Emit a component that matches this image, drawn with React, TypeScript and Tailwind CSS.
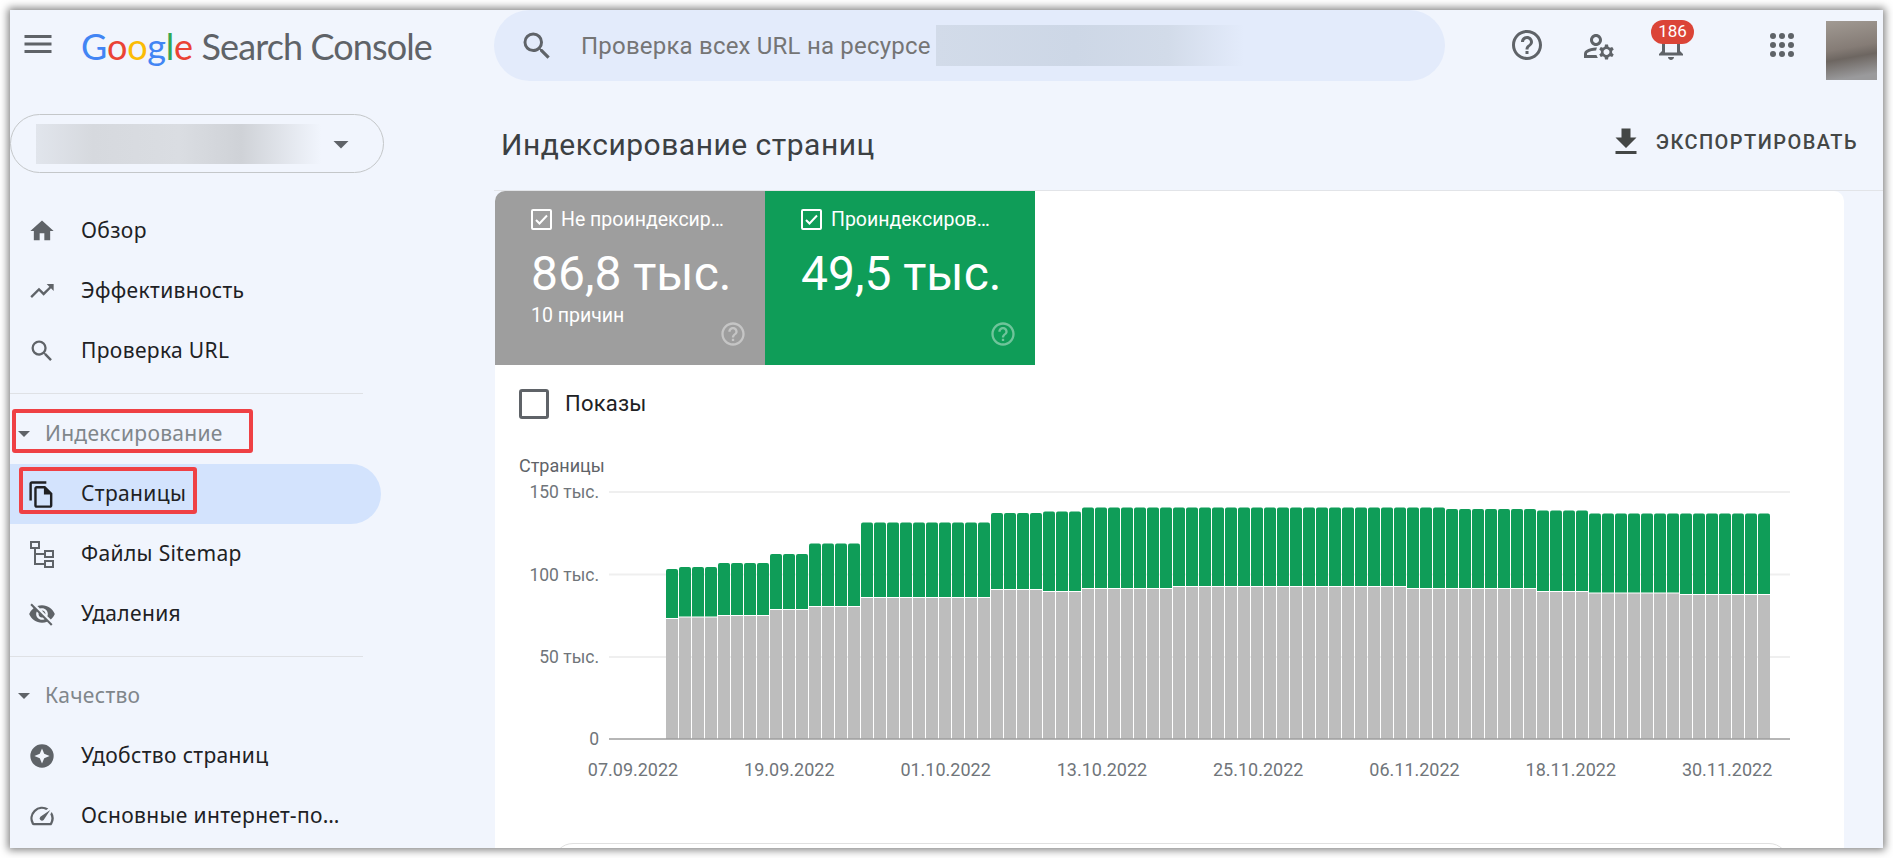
import React from "react";
import {
  MdMenu, MdSearch, MdHelpOutline, MdOutlineManageAccounts, MdOutlineNotifications,
  MdHome, MdTrendingUp, MdOutlineFileCopy, MdVisibilityOff, MdOutlineSpeed, MdFileDownload, MdArrowDropDown,
} from "react-icons/md";

const BASE = 739;
const segments: [number, number, number][] = [
  [1, 569, 619], [3, 567, 617.5], [4, 563, 616], [3, 554, 610], [4, 543.5, 607], [10, 522.5, 598],
  [4, 513, 590], [3, 511.5, 592], [7, 507.5, 589], [18, 507.5, 587], [3, 507.5, 589], [7, 509, 589],
  [4, 510.5, 592], [7, 513.5, 593.5], [7, 513.5, 595],
];
const bars: { g: number; s: number }[] = segments.flatMap(([n, g, s]) => Array.from({ length: n }, () => ({ g, s })));
const dates = ["07.09.2022", "19.09.2022", "01.10.2022", "13.10.2022", "25.10.2022", "06.11.2022", "18.11.2022", "30.11.2022"];
const yTicks: [number, string][] = [[492, "150 тыс."], [574.5, "100 тыс."], [657, "50 тыс."], [739, "0"]];

function SitemapIcon() {
  return (
    <svg width="26" height="28" viewBox="0 0 26 28" fill="none" stroke="#5f6368" strokeWidth="2" className="ml-px">
      <rect x="2" y="2" width="8" height="6" />
      <rect x="16" y="11" width="8" height="6" />
      <rect x="16" y="21" width="8" height="6" />
      <path d="M6 8v16h10M6 14h10" />
    </svg>
  );
}

function SparkIcon() {
  return (
    <svg width="28" height="28" viewBox="0 0 24 24">
      <path fill="#5f6368" fillRule="evenodd" d="M12 2a10 10 0 1 0 0 20 10 10 0 0 0 0-20zm0 3.500 1.900 4.600 4.600 1.900-4.600 1.900-1.900 4.600-1.900-4.600L5.500 12l4.600-1.900z" />
    </svg>
  );
}

function AppsIcon() {
  return (
    <svg width="36" height="36" viewBox="0 0 36 36" fill="#5f6368" className="mt-[17px]">
      {[9, 18, 27].flatMap((y) => [9, 18, 27].map((x) => <circle key={`${x}-${y}`} cx={x} cy={y} r="3" />))}
    </svg>
  );
}

function NavRow({ icon, label, active, children }: { icon: React.ReactNode; label: string; active?: boolean; children?: React.ReactNode }) {
  return (
    <div className={`relative flex h-[60px] w-[371px] items-center rounded-r-[30px] ${active ? "bg-[#d3e3fd]" : ""}`}>
      <span className="flex w-[71px] shrink-0 items-center justify-start pl-[18px]">{icon}</span>
      <span className="font-['Noto_Sans',sans-serif] text-[21px] tracking-[0.35px] text-[#202124]">{label}</span>
      {children}
    </div>
  );
}

function Section({ label, className, children }: { label: string; className: string; children?: React.ReactNode }) {
  return (
    <div className={`relative flex h-[60px] items-center ${className}`}>
      <svg className="ml-[8px] w-[12px]" height="6" viewBox="0 0 12 6"><path d="M0 0h12L6 6z" fill="#5f6368" /></svg>
      <span className="ml-[15px] font-['Noto_Sans',sans-serif] text-[21px] tracking-[0.3px] text-[#80868b]">{label}</span>
      {children}
    </div>
  );
}

function Tile({ color, title, value, sub }: { color: string; title: string; value: string; sub?: string }) {
  return (
    <div className={`relative h-[174px] w-[270px] pl-[36px] pt-[18px] text-white ${color}`}>
      <div className="flex h-[21px] items-center">
        <span className="flex size-[21px] items-center justify-center rounded-[2px] border-2 border-white">
          <svg width="13" height="11" viewBox="0 0 13 11" fill="none" stroke="#fff" strokeWidth="2"><path d="M1 6l3.500 3.500L12 1.500" /></svg>
        </span>
        <span className="ml-[9px] text-[19.5px] leading-[24px]">{title}</span>
      </div>
      <div className="mt-[14px] text-[48px] leading-[60px]">{value}</div>
      {sub && <div className="text-[19.5px] leading-[24px]">{sub}</div>}
      <MdHelpOutline size={28} className="absolute bottom-[17px] right-[18px] text-white/40" />
    </div>
  );
}

export default function App() {
  return (
    <div className="h-[858px] w-[1893px] overflow-hidden bg-white p-[10px] font-['Roboto',sans-serif]">
      <div className="flex h-[838px] w-[1873px] flex-col overflow-hidden bg-[#f1f5fd] shadow-[0_0_8px_2px_rgba(0,0,0,0.5)]">
        <header className="flex h-[71px] shrink-0 items-start">
          <div className="flex w-[484px] shrink-0 items-start">
            <MdMenu size={36} className="ml-[10px] mt-[16px] shrink-0 text-[#5f6368]" />
            <div className="ml-[25px] mt-[14px] flex items-baseline whitespace-nowrap font-['Lato',sans-serif] text-[36px] leading-[44px]">
              <span className="tracking-[-0.3px] text-[#4285f4]">G</span>
              <span className="tracking-[-0.3px] text-[#ea4335]">o</span>
              <span className="tracking-[-0.3px] text-[#fbbc05]">o</span>
              <span className="tracking-[-0.3px] text-[#4285f4]">g</span>
              <span className="tracking-[-0.3px] text-[#34a853]">l</span>
              <span className="tracking-[-0.3px] text-[#ea4335]">e</span>
              <span className="ml-[9px] tracking-[-0.9px] text-[#5f6368]">Search Console</span>
            </div>
          </div>
          <div className="flex h-[71px] w-[951px] shrink-0 items-center rounded-[36px] bg-[#e3ebfb]">
            <MdSearch size={36} className="ml-[25px] shrink-0 text-[#5f6368]" />
            <span className="ml-[26px] whitespace-nowrap text-[24px] tracking-[0.2px] text-[#757575]">Проверка всех URL на ресурсе</span>
            <div className="ml-[5px] h-[41px] w-[308px] bg-[linear-gradient(90deg,#d2dbe9,#cdd7e6_45%,#d2dbe9_75%,#e3ebfb)]" />
          </div>
          <MdHelpOutline size={36} className="ml-[64px] mt-[17px] shrink-0 text-[#5f6368]" />
          <MdOutlineManageAccounts size={36} className="ml-[36px] mt-[18px] shrink-0 text-[#5f6368]" />
          <div className="relative ml-[36px] mt-[17px] shrink-0">
            <MdOutlineNotifications size={36} className="text-[#5f6368]" />
            <span className="absolute left-[-2px] top-[-7px] flex h-[24px] w-[43px] items-center justify-center rounded-[12px] bg-[#db4437] text-[17px] text-white">186</span>
          </div>
          <div className="ml-[75px] shrink-0"><AppsIcon /></div>
          <div className="ml-[26px] mt-[11px] h-[59px] w-[51px] shrink-0 bg-[linear-gradient(170deg,#a19a93,#857c76_45%,#6d6661_60%,#9a9a9c_90%)]" />
        </header>
        <div className="flex min-h-0 flex-1">
          <aside className="flex w-[484px] shrink-0 flex-col">
            <div className="mt-[33px] flex h-[59px] w-[374px] shrink-0 items-center rounded-[30px] border border-[#c4c7c9] pl-[25px]">
              <div className="h-[40px] w-[285px] bg-[linear-gradient(90deg,#e1e5ec,#d6d9de_20%,#dadde2_50%,#cfd2d7_72%,#f1f5fd)]" />
              <MdArrowDropDown size={36} className="ml-[2px] text-[#5f6368]" />
            </div>
            <div className="mt-[28px]">
              <NavRow icon={<MdHome size={28} className="text-[#5f6368]" />} label="Обзор" />
              <NavRow icon={<MdTrendingUp size={28} className="text-[#5f6368]" />} label="Эффективность" />
              <NavRow icon={<MdSearch size={28} className="text-[#5f6368]" />} label="Проверка URL" />
            </div>
            <div className="mt-[12px] h-px w-[353px] bg-[#dfe1e5]" />
            <Section label="Индексирование" className="mt-[10px]">
              <div className="absolute left-[2px] top-[5px] h-[44px] w-[241px] rounded-[3px] border-4 border-[#ef4044]" />
            </Section>
            <NavRow icon={<MdOutlineFileCopy size={29} className="ml-[-1px] text-[#202124]" />} label="Страницы" active>
              <div className="absolute left-[9px] top-[3px] h-[47px] w-[178px] rounded-[3px] border-4 border-[#ef4044]" />
            </NavRow>
            <NavRow icon={<SitemapIcon />} label="Файлы Sitemap" />
            <NavRow icon={<MdVisibilityOff size={28} className="text-[#5f6368]" />} label="Удаления" />
            <div className="mt-[12px] h-px w-[353px] bg-[#dfe1e5]" />
            <Section label="Качество" className="mt-[9px]" />
            <NavRow icon={<SparkIcon />} label="Удобство страниц" />
            <NavRow icon={<MdOutlineSpeed size={28} className="text-[#5f6368]" />} label="Основные интернет-по…" />
          </aside>
          <main className="flex min-w-0 flex-1 flex-col">
            <div className="flex h-[110px] shrink-0 items-center justify-between border-b border-[#e2e4e8] pl-[7px] pr-[25px] pt-[12px]">
              <h1 className="mt-[6px] text-[30px] font-normal tracking-[0.5px] text-[#3c4043]">Индексирование страниц</h1>
              <div className="flex items-center">
                <MdFileDownload size={36} className="text-[#444746]" />
                <span className="ml-[12px] text-[20px] font-medium tracking-[1.45px] text-[#444746]">ЭКСПОРТИРОВАТЬ</span>
              </div>
            </div>
            <section className="ml-px mr-[39px] min-h-0 flex-1 overflow-hidden rounded-t-[10px] bg-white">
              <div className="flex">
                <Tile color="bg-[#9e9e9e]" title="Не проиндексир…" value="86,8 тыс." sub="10 причин" />
                <Tile color="bg-[#0f9d58]" title="Проиндексиров…" value="49,5 тыс." />
              </div>
              <div className="ml-[24px] mt-[24px] flex h-[30px] items-center">
                <span className="size-[30px] rounded-[3px] border-[3px] border-[#5f6368]" />
                <span className="ml-[16px] text-[22px] leading-[30px] tracking-[0.2px] text-[#202124]">Показы</span>
              </div>
              <div className="ml-[24px] mt-[36px] text-[18px] leading-[22px] text-[#5f6368]">Страницы</div>
              <svg width="1349" height="313" viewBox="495 477 1349 313" className="block">
                {yTicks.map(([y, t]) => (
                  <g key={t}>
                    <text x={599} y={y + 6} textAnchor="end" fontSize="17.500" fill="#70757a">{t}</text>
                    {t !== "0" && <line x1={609} x2={1790} y1={y} y2={y} stroke="#efefef" strokeWidth="2" />}
                  </g>
                ))}
                {bars.map((b, i) => {
                  const x = 666 + i * 13;
                  return (
                    <g key={i}>
                      <rect x={x} y={b.s} width={12} height={BASE - b.s} fill="#bdbdbd" />
                      <path d={`M${x} ${b.s - 1}V${b.g + 2}q0-2 2-2h8q2 0 2 2V${b.s - 1}z`} fill="#0f9d58" />
                    </g>
                  );
                })}
                <line x1={609} x2={1790} y1={739} y2={739} stroke="#9e9e9e" strokeWidth="1.500" />
                {dates.map((d, i) => (
                  <text key={d} x={633 + i * 156.3} y={776} textAnchor="middle" fontSize="18" fill="#70757a">{d}</text>
                ))}
              </svg>
              <div className="ml-[58px] mt-[53px] h-[40px] w-[1236px] rounded-[20px] border border-[#e0e0e0]" />
            </section>
          </main>
        </div>
      </div>
    </div>
  );
}
